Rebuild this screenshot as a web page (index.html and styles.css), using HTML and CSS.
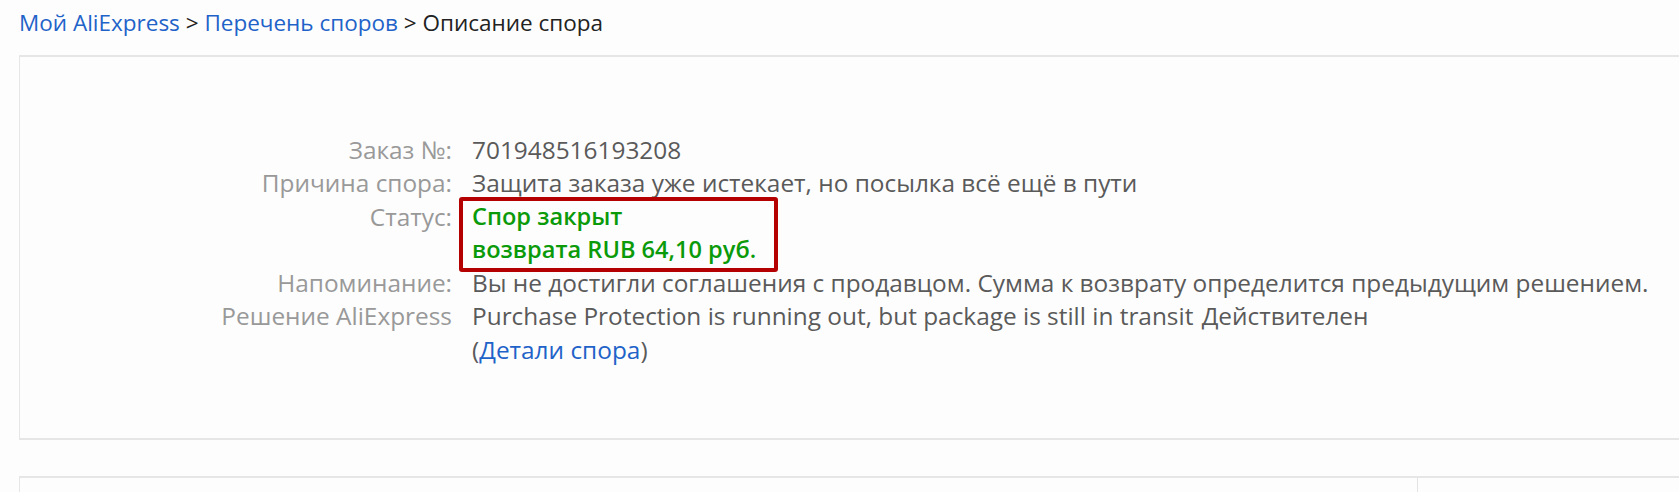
FILE: index.html
```html
<!DOCTYPE html>
<html lang="ru">
<head>
<meta charset="utf-8">
<title>Описание спора</title>
<link rel="stylesheet" href="styles.css">
</head>
<body>
<div class="page">
  <nav class="crumbs">
    <a href="#" class="crumb-link">Мой AliExpress</a> &gt; <a href="#" class="crumb-link">Перечень споров</a> &gt; <span class="crumb-current">Описание спора</span>
  </nav>
  <section class="card">
    <dl class="info">
      <dt class="label">Заказ №:</dt>
      <dd class="value">701948516193208</dd>
      <dt class="label">Причина спора:</dt>
      <dd class="value">Защита заказа уже истекает, но посылка всё ещё в пути</dd>
      <dt class="label">Статус:</dt>
      <dd class="value status"><span class="status-box">Спор закрыт<br>возврата RUB 64,10 руб.</span></dd>
      <dt class="label">Напоминание:</dt>
      <dd class="value">Вы не достигли соглашения с продавцом. Сумма к возврату определится предыдущим решением.</dd>
      <dt class="label">Решение AliExpress</dt>
      <dd class="value">Purchase Protection is running out, but package is still in transit <span class="valid">Действителен</span><br>(<a href="#" class="detail-link">Детали спора</a>)</dd>
    </dl>
  </section>
  <section class="card card-lower">
    <div class="lower-main"></div>
    <div class="lower-side"></div>
  </section>
</div>
</body>
</html>
```
FILE: styles.css
```css
html, body {
  margin: 0;
  padding: 0;
  background: #fdfdfd;
}
body {
  font-family: "Open Sans", "Noto Sans", sans-serif;
  font-size: 24.4px;
  color: #555;
  overflow: hidden;
}
.page {
  padding-left: 19px;
  width: 1720px;
}
.crumbs {
  height: 55px;
  line-height: 45px;
  font-size: 22.5px;
  color: #222;
  white-space: nowrap;
}
.crumb-link {
  color: #1f63c9;
  text-decoration: none;
}
.crumb-current {
  color: #222;
}
.card {
  border: 2px solid #e6e6e6;
  border-left-width: 1px;
  border-right: none;
  background: #fdfdfd;
}
.info {
  margin: 0;
  padding: 76px 0 72px;
  display: grid;
  grid-template-columns: 432px 1fr;
  column-gap: 20px;
  line-height: 33.3px;
}
.label {
  text-align: right;
  color: #999;
  margin: 0;
  white-space: nowrap;
}
.value {
  margin: 0;
  color: #5a5a5a;
  white-space: nowrap;
}
.valid {
  margin-left: 2px;
}
.status {
  color: #0a9a0a;
  font-weight: 600;
  font-size: 23.6px;
}
.status-box {
  position: relative;
  display: inline-block;
}
.status-box::after {
  content: "";
  position: absolute;
  left: -13px;
  top: -3px;
  width: 311px;
  height: 67px;
  border: 4px solid #b40000;
  border-radius: 3px;
}
.detail-link {
  color: #1f63c9;
  text-decoration: none;
}
.card-lower {
  margin-top: 36px;
  height: 14px;
  display: flex;
  border-bottom: none;
}
.lower-main {
  width: 1397px;
  border-right: 1px solid #e3e3e3;
}
.lower-side {
  flex: 1;
}
```
